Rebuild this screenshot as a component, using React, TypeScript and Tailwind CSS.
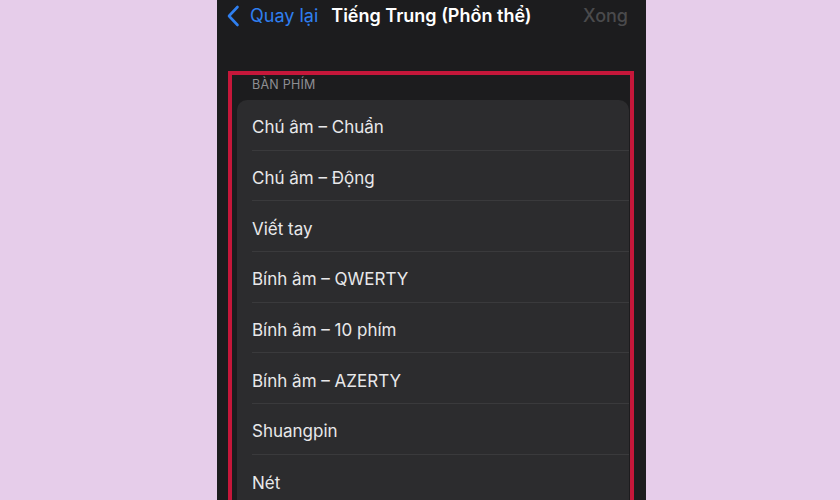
import React from "react";

const keyboards = [
  "Chú âm – Chuẩn",
  "Chú âm – Động",
  "Viết tay",
  "Bính âm – QWERTY",
  "Bính âm – 10 phím",
  "Bính âm – AZERTY",
  "Shuangpin",
  "Nét",
];

function ChevronLeft() {
  return (
    <svg width="14" height="22" viewBox="0 0 14 22" fill="none">
      <path
        d="M11.5 2 L3 11 L11.5 20"
        stroke="#2f7ff0"
        strokeWidth="2.6"
        strokeLinecap="round"
        strokeLinejoin="round"
      />
    </svg>
  );
}

export default function App() {
  return (
    <div
      className="flex h-[500px] w-[840px] overflow-hidden bg-[#e6cdea] pl-[217px]"
      style={{ fontFamily: "Inter, 'Noto Sans', sans-serif" }}
    >
      <div className="flex h-full w-[429px] flex-col overflow-hidden bg-[#1c1c1e]">
        {/* nav bar */}
        <div className="flex h-[32px] shrink-0 items-center">
          <div className="ml-[9px] flex items-center gap-[10px]">
            <ChevronLeft />
            <span className="text-[18px] leading-none text-[#2f7ff0]">Quay lại</span>
          </div>
          <span className="ml-[13px] text-[18px] font-semibold leading-none text-white">
            Tiếng Trung (Phồn thể)
          </span>
          <span className="ml-auto mr-[18px] text-[18px] font-medium leading-none text-[#4a4a4c]">
            Xong
          </span>
        </div>

        {/* highlighted section */}
        <div className="ml-[11px] mt-[39px] w-[406px] flex-1 border-[4px] border-b-0 border-[#c5173a]">
          <div className="flex h-[25px] items-center pb-[4px] pl-[20px]">
            <span className="text-[12.5px] leading-none tracking-[0.02em] text-[#8e8e93]">
              BÀN PHÍM
            </span>
          </div>
          <div className="ml-[5px] mr-[1px] rounded-t-[10px] bg-[#2c2c2e]">
            {keyboards.map((k, i) => (
              <div key={k} className="flex h-[50.7px] flex-col pl-[15px]">
                <div className="flex flex-1 items-center pt-[6px]">
                  <span className="text-[17px] leading-none text-[#e8e8ea]">{k}</span>
                </div>
                {i < keyboards.length - 1 && <div className="h-px bg-[#3a3a3c]" />}
              </div>
            ))}
          </div>
        </div>
        <div className="ml-[11px] h-[4px] w-[406px] shrink-0 bg-[#c5173a]" />
      </div>
    </div>
  );
}
